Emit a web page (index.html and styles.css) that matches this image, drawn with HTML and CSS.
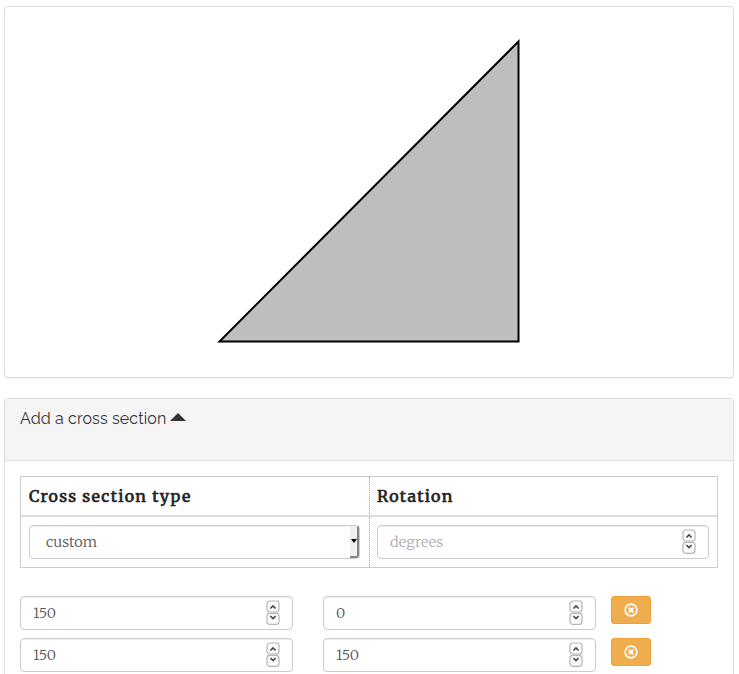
FILE: index.html
```html
<!DOCTYPE html>
<html lang="en">
<head>
<meta charset="utf-8">
<title>Cross section</title>
<link rel="stylesheet" href="styles.css">
</head>
<body>
<svg width="0" height="0" class="defs">
  <symbol id="spin" viewBox="0 0 14 26">
    <g fill="#fbfbfb" stroke="#b5b5b5" stroke-width="1.2">
      <rect x="1" y="1" width="12" height="11" rx="2.8"/>
      <rect x="1" y="13.4" width="12" height="11" rx="2.8"/>
    </g>
    <path d="M4.4 8.5 7 5.9l2.6 2.6M4.4 16l2.6 2.6L9.6 16" fill="none" stroke="#444" stroke-width="1.5"/>
  </symbol>
  <symbol id="remove" viewBox="0 0 14 14">
    <circle cx="7" cy="7" r="5.9" fill="none" stroke="#fff" stroke-width="1.7"/>
    <path d="M4.7 4.7l4.6 4.6M9.3 4.7 4.7 9.3" stroke="#fff" stroke-width="2"/>
  </symbol>
</svg>
<main>
  <section class="panel preview">
    <svg width="304" height="306" viewBox="0 0 304 306">
      <path d="M2.5 303.5H301.5V3.5Z" fill="#bebebe" stroke="#000" stroke-width="2"/>
    </svg>
  </section>
  <section class="panel editor">
    <header class="heading"><span>Add a cross section</span><i class="caret"></i></header>
    <div class="body">
      <div class="table">
        <div class="th">Cross section type</div>
        <div class="th">Rotation</div>
        <div class="td"><div class="field select"><span>custom</span><b class="drop"><i></i></b></div></div>
        <div class="td"><div class="field hint"><span>degrees</span><svg class="spin"><use href="#spin"/></svg></div></div>
      </div>
      <div class="row">
        <div class="field num"><span>150</span><svg class="spin"><use href="#spin"/></svg></div>
        <div class="field num"><span>0</span><svg class="spin"><use href="#spin"/></svg></div>
        <button class="remove" aria-label="Remove"><svg width="14" height="14"><use href="#remove"/></svg></button>
      </div>
      <div class="row">
        <div class="field num"><span>150</span><svg class="spin"><use href="#spin"/></svg></div>
        <div class="field num"><span>150</span><svg class="spin"><use href="#spin"/></svg></div>
        <button class="remove" aria-label="Remove"><svg width="14" height="14"><use href="#remove"/></svg></button>
      </div>
    </div>
  </section>
</main>
</body>
</html>
```
FILE: styles.css
```css
* { box-sizing: border-box; }
html { overflow: hidden; }
body {
  margin: 0;
  height: 674px;
  overflow: hidden;
  background: #fff;
  color: #555;
  font-family: Merriweather, "DejaVu Serif Condensed", "DejaVu Serif", serif;
}
.defs { display: none; }
main { height: 674px; padding: 6px 5px 0 4px; overflow: hidden; }
.panel {
  border: 1px solid #ddd;
  border-radius: 4px;
  box-shadow: 0 1px 1px rgba(0, 0, 0, .05);
}
.preview {
  height: 372px;
  padding: 31px 0 0 212px;
}
.preview svg { display: block; }
.editor { height: 320px; margin-top: 20px; }
.heading {
  display: flex;
  height: 62px;
  padding: 8px 15px;
  border-bottom: 1px solid #ddd;
  border-radius: 3px 3px 0 0;
  background: #f5f5f5;
  color: #333;
  font: 16px/24px Raleway, Lato, sans-serif;
  letter-spacing: .12px;
}
.heading span { width: 146px; white-space: nowrap; }
.caret {
  width: 16px;
  height: 8px;
  margin: 6px 0 0 4px;
  background: #333;
  clip-path: polygon(50% 0, 100% 100%, 0 100%);
}
.body { padding: 15px; }
.table {
  display: grid;
  grid-template-columns: 349px 347px;
  grid-template-rows: 40px 50px;
  width: 698px;
  height: 92px;
  margin-bottom: 28px;
  border: 1px solid #ccc;
}
.th {
  padding-left: 8px;
  border-bottom: 2px solid #ddd;
  color: #222;
  font-size: 16px;
  font-weight: 400;
  -webkit-text-stroke: .6px #222;
  line-height: 38px;
  letter-spacing: 1.25px;
  white-space: nowrap;
}
.th:nth-child(even) { padding-left: 7px; }
.td { padding: 8px; }
.td:nth-child(even) { padding-left: 7px; }
.th:nth-child(odd), .td:nth-child(odd) { border-right: 1px dotted #aaa; }
.field {
  display: flex;
  align-items: center;
  justify-content: space-between;
  height: 34px;
  padding: 0 12px;
  border: 1px solid #ccc;
  border-radius: 4px;
  background: #fff;
  box-shadow: inset 0 1px 1px rgba(0, 0, 0, .075);
  font-size: 14.5px;
  font-weight: 300;
}
.hint { color: #aaa; }
.select { margin-right: 1px; padding: 0 0 0 16px; }
.drop {
  display: flex;
  align-items: center;
  width: 9px;
  height: 32px;
  border-right: 2px solid #858585;
  border-bottom: 2px solid #858585;
  border-radius: 0 2px 3px 0;
  background: #f0f0ef;
}
.drop i {
  width: 6px;
  height: 4px;
  margin-left: 1px;
  background: #000;
  clip-path: polygon(0 0, 100% 0, 50% 100%);
}
.spin { width: 14px; height: 26px; }
.row { display: flex; margin-bottom: 8px; }
.num { width: 273px; margin-right: 30px; }
.num span { letter-spacing: -.2px; }
.num + .num { margin-right: 15px; }
.remove {
  display: flex;
  align-items: center;
  justify-content: center;
  width: 40px;
  height: 28px;
  padding: 0;
  border: 1px solid #eea236;
  border-radius: 3px;
  background: #f0ad4e;
}
```
